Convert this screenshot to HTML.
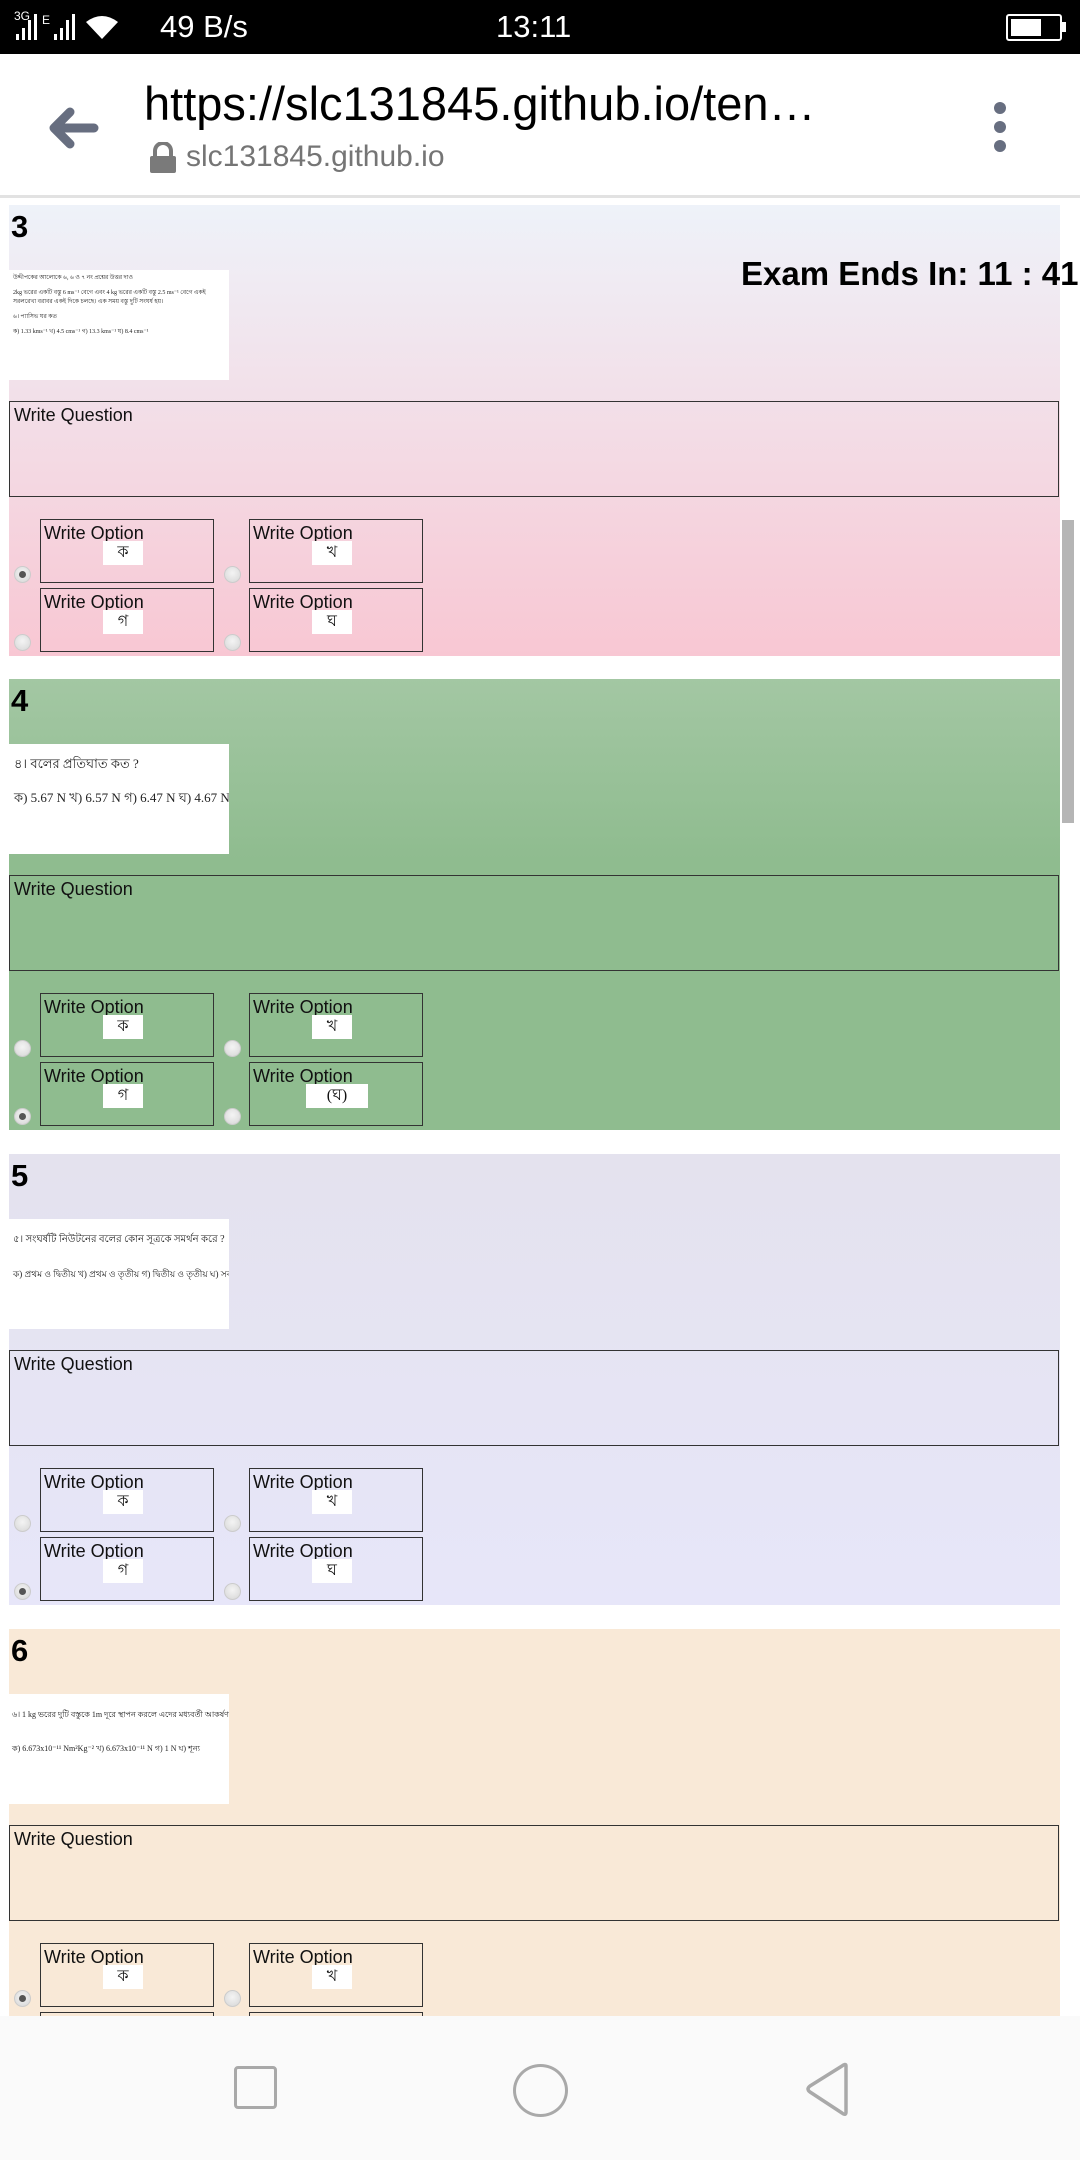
<!DOCTYPE html>
<html><head><meta charset="utf-8"><style>
*{margin:0;padding:0;box-sizing:border-box}
body{width:1080px;height:2160px;position:relative;overflow:hidden;background:#fff;font-family:"Liberation Sans","Noto Sans CJK SC",sans-serif}
.abs{position:absolute}
.sec{position:absolute;left:9px;width:1051px;height:451px}
.num{position:absolute;left:2px;top:4px;font-weight:bold;font-size:31px;color:#000}
.img{position:absolute;left:0;top:65px;width:220px;height:110px;background:#fff;overflow:hidden;font-family:"Liberation Serif","Noto Serif CJK SC",serif;color:#222;white-space:nowrap}
.q{position:absolute;left:0;top:196px;width:1050px;height:96px;border:1.5px solid #333;font-size:18px;padding:3px 4px;color:#111}
.o{position:absolute;width:174px;height:64px;border:1.5px solid #333;font-size:18px;padding:2px 3px;color:#111;line-height:22px}
.lab{position:absolute;top:21px;left:62px;width:40px;height:24px;background:#fff;font-size:16px;text-align:center;line-height:24px;font-family:"Liberation Serif","Noto Serif CJK SC",serif}
.r{position:absolute;width:17px;height:17px;border-radius:50%;background:radial-gradient(circle at 50% 40%,#f4f4f4,#d6d6d6);border:1px solid #ccc}
.r.on::after{content:"";position:absolute;left:4px;top:4px;width:7px;height:7px;border-radius:50%;background:#555}
</style></head><body>
<div class="abs" style="left:0;top:0;width:1080px;height:54px;background:#000;color:#fff">
 <div class="abs" style="left:14px;top:9px;font-size:12px">3G</div>
 <svg class="abs" style="left:14px;top:12px" width="150" height="30"><g fill="#fff"><rect x="2" y="22" width="3" height="6"/><rect x="8" y="16" width="3" height="12"/><rect x="14" y="8" width="3" height="20"/><rect x="20" y="2" width="3" height="26"/><rect x="40" y="22" width="3" height="6"/><rect x="46" y="16" width="3" height="12"/><rect x="52" y="8" width="3" height="20"/><rect x="58" y="2" width="3" height="26"/></g><text x="28" y="12" font-size="12" fill="#fff" font-family="Liberation Sans">E</text><path d="M72 10 Q88 -2 104 10 L88 27Z" fill="#fff"/></svg>
 <div class="abs" style="left:160px;top:9px;font-size:31px">49 B/s</div>
 <div class="abs" style="left:496px;top:9px;font-size:31px">13:11</div>
 <div class="abs" style="left:1006px;top:14px;width:56px;height:27px;border:2px solid #fff;border-radius:3px"><div style="position:absolute;left:3px;top:3px;width:30px;height:17px;background:#fff"></div></div>
 <div class="abs" style="left:1062px;top:22px;width:4px;height:10px;background:#fff"></div>
</div>
<div class="abs" style="left:0;top:54px;width:1080px;height:144px;background:#fff;border-bottom:3px solid #e2e2e2">
 <svg class="abs" style="left:44px;top:50px" width="56" height="48"><path d="M50 24H10M26 8L10 24L26 40" stroke="#676e80" stroke-width="9" fill="none" stroke-linecap="round" stroke-linejoin="round"/></svg>
 <div class="abs" style="left:144px;top:22px;font-size:47px;color:#000;white-space:nowrap">https://slc131845.github.io/ten…</div>
 <svg class="abs" style="left:148px;top:88px" width="30" height="32"><path d="M7 14V9a8 8 0 0 1 16 0v5" stroke="#7a7a7a" stroke-width="4" fill="none"/><rect x="2" y="14" width="26" height="17" rx="2" fill="#7a7a7a"/></svg>
 <div class="abs" style="left:186px;top:86px;font-size:30px;color:#757575">slc131845.github.io</div>
 <div class="abs" style="left:994px;top:48px;width:12px;height:12px;border-radius:50%;background:#676e80"></div>
 <div class="abs" style="left:994px;top:67px;width:12px;height:12px;border-radius:50%;background:#676e80"></div>
 <div class="abs" style="left:994px;top:86px;width:12px;height:12px;border-radius:50%;background:#676e80"></div>
</div>

<div class="sec" style="top:205px;background:linear-gradient(#eef2f9,#f8c7d3)">
 <div class="num">3</div>
 <div class="img" style="font-size:6px;line-height:9px;padding:4px;white-space:normal"><div>উদ্দীপকের আলোকে ৬, ৬ ও ৭ নং প্রশ্নের উত্তর দাও</div><div style="margin-top:6px">2kg ভরের একটি বস্তু 6 ms⁻¹ বেগে এবং 4 kg ভরের একটি বস্তু 2.5 ms⁻¹ বেগে একই সরলরেখা বরাবর একই দিকে চলছে। এক সময় বস্তু দুটি সংঘর্ষ হয়।</div><div style="margin-top:6px">৬। প্যাসিভ ঘর কত</div><div style="margin-top:6px">ক) 1.33 kms⁻¹ খ) 4.5 cms⁻¹ গ) 13.3 kms⁻¹ ঘ) 8.4 cms⁻¹</div></div>
 <div class="q">Write Question</div>
 <div class="o" style="left:31px;top:314px">Write Option<div class="lab">ক</div></div>
 <div class="o" style="left:240px;top:314px">Write Option<div class="lab">খ</div></div>
 <div class="o" style="left:31px;top:383px">Write Option<div class="lab">গ</div></div>
 <div class="o" style="left:240px;top:383px">Write Option<div class="lab">ঘ</div></div>
 <div class="r on" style="left:5px;top:361px"></div><div class="r" style="left:215px;top:361px"></div>
 <div class="r" style="left:5px;top:429px"></div><div class="r" style="left:215px;top:429px"></div>
</div>
<div class="abs" style="left:741px;top:255px;font-size:33px;font-weight:bold;color:#000;white-space:nowrap">Exam Ends In: 11 : 41</div>

<div class="sec" style="top:679px;background:linear-gradient(#a3c7a3,#8fbc8f 40%,#8fbc8f)">
 <div class="num">4</div>
 <div class="img" style="font-size:13px;padding:10px 5px;line-height:20px"><div>৪। বলের প্রতিঘাত কত ?</div><div style="margin-top:14px;font-size:13px">ক) 5.67 N খ) 6.57 N গ) 6.47 N ঘ) 4.67 N ;</div></div>
 <div class="q">Write Question</div>
 <div class="o" style="left:31px;top:314px">Write Option<div class="lab">ক</div></div>
 <div class="o" style="left:240px;top:314px">Write Option<div class="lab">খ</div></div>
 <div class="o" style="left:31px;top:383px">Write Option<div class="lab">গ</div></div>
 <div class="o" style="left:240px;top:383px">Write Option<div class="lab" style="width:62px;left:56px">(ঘ)</div></div>
 <div class="r" style="left:5px;top:361px"></div><div class="r" style="left:215px;top:361px"></div>
 <div class="r on" style="left:5px;top:429px"></div><div class="r" style="left:215px;top:429px"></div>
</div>

<div class="sec" style="top:1154px;background:linear-gradient(#e4e2ee,#e7e6f9)">
 <div class="num">5</div>
 <div class="img" style="font-size:10px;padding:12px 4px;line-height:18px"><div>৫। সংঘর্ষটি নিউটনের বলের কোন সূত্রকে সমর্থন করে ?</div><div style="margin-top:16px;font-size:9px">ক) প্রথম ও দ্বিতীয় খ) প্রথম ও তৃতীয় গ) দ্বিতীয় ও তৃতীয় ঘ) সবগুলোই</div></div>
 <div class="q">Write Question</div>
 <div class="o" style="left:31px;top:314px">Write Option<div class="lab">ক</div></div>
 <div class="o" style="left:240px;top:314px">Write Option<div class="lab">খ</div></div>
 <div class="o" style="left:31px;top:383px">Write Option<div class="lab">গ</div></div>
 <div class="o" style="left:240px;top:383px">Write Option<div class="lab">ঘ</div></div>
 <div class="r" style="left:5px;top:361px"></div><div class="r" style="left:215px;top:361px"></div>
 <div class="r on" style="left:5px;top:429px"></div><div class="r" style="left:215px;top:429px"></div>
</div>

<div class="sec" style="top:1629px;background:#f9e9d7">
 <div class="num">6</div>
 <div class="img" style="font-size:8px;padding:14px 3px;line-height:14px"><div>৬। 1 kg ভরের দুটি বস্তুকে 1m দূরে স্থাপন করলে এদের মধ্যবর্তী আকর্ষণ বল -</div><div style="margin-top:20px">ক) 6.673x10⁻¹¹ Nm²Kg⁻² খ) 6.673x10⁻¹¹ N গ) 1 N ঘ) শূন্য</div></div>
 <div class="q">Write Question</div>
 <div class="o" style="left:31px;top:314px">Write Option<div class="lab">ক</div></div>
 <div class="o" style="left:240px;top:314px">Write Option<div class="lab">খ</div></div>
 <div class="o" style="left:31px;top:383px"></div>
 <div class="o" style="left:240px;top:383px"></div>
 <div class="r on" style="left:5px;top:361px"></div><div class="r" style="left:215px;top:361px"></div>
</div>

<div class="abs" style="left:1062px;top:520px;width:12px;height:303px;background:#b5b5b5"></div>

<div class="abs" style="left:0;top:2016px;width:1080px;height:144px;background:#fafafa">
 <div class="abs" style="left:234px;top:50px;width:43px;height:43px;border:3px solid #a9a9a9;border-radius:4px"></div>
 <div class="abs" style="left:513px;top:48px;width:55px;height:53px;border:3px solid #a9a9a9;border-radius:50%"></div>
 <svg class="abs" style="left:804px;top:46px" width="50" height="56"><path d="M42 4V50Q42 54 38 51L6 30Q2 27 6 24L38 4Q42 1 42 4Z" fill="none" stroke="#a9a9a9" stroke-width="3.5" stroke-linejoin="round"/></svg>
</div>
</body></html>
